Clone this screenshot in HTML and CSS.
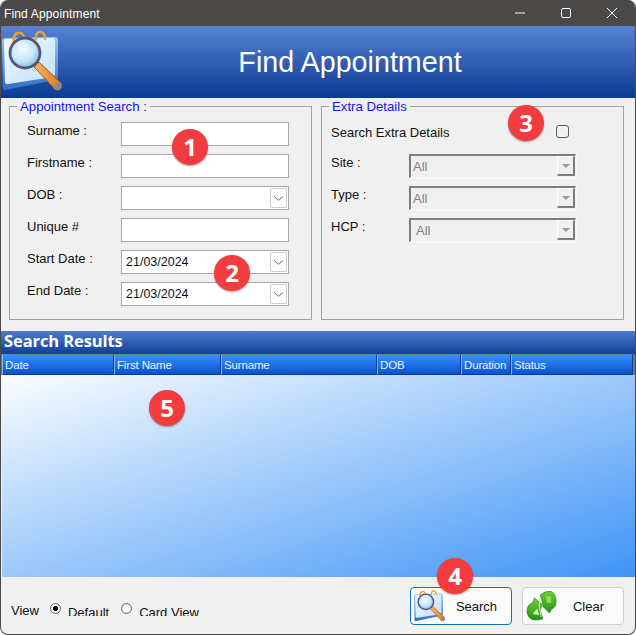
FILE: index.html
```html
<!DOCTYPE html>
<html lang="en">
<head>
<meta charset="utf-8">
<title>Find Appointment</title>
<link rel="stylesheet" href="styles.css">
</head>
<body>
<svg class="defs" width="0" height="0" aria-hidden="true">
  <defs>
    <linearGradient id="pageFill" x1="0" y1="0" x2="1" y2="1"><stop offset="0" stop-color="#f2faff"/><stop offset="1" stop-color="#bfe0f8"/></linearGradient>
    <linearGradient id="pageSide" x1="0" y1="0" x2="0" y2="1"><stop offset="0" stop-color="#9cc8ef"/><stop offset="1" stop-color="#2f6ec4"/></linearGradient>
    <radialGradient id="lens" cx="0.42" cy="0.38" r="0.65"><stop offset="0" stop-color="#f4fcff"/><stop offset="0.6" stop-color="#c4e6f7"/><stop offset="1" stop-color="#86bbdc"/></radialGradient>
    <linearGradient id="handle" x1="0" y1="0" x2="1" y2="0"><stop offset="0" stop-color="#f8b565"/><stop offset="1" stop-color="#da781c"/></linearGradient>
    <linearGradient id="leaf" x1="0" y1="0" x2="0" y2="1"><stop offset="0" stop-color="#6fd232"/><stop offset="1" stop-color="#249312"/></linearGradient>
    <symbol id="finder" viewBox="0 0 62 64">
      <path d="M3 8 L53 7 Q56 7 56 10 L56 46 Q56 49 53 50 L4 60 Q1 61 1 58 L0 11 Q0 8 3 8Z" fill="url(#pageSide)"/>
      <path d="M4 9 L51 8 Q53 8 53 10 L53 44 Q53 46 51 47 L6 54 Q3 54 3 52 L2 11 Q2 9 4 9Z" fill="url(#pageFill)"/>
      <path d="M12 13 C9 1 22 -1 23 10" fill="none" stroke="#e0a52c" stroke-width="2.6"/>
      <path d="M34 10 C32 -1 44 -1 43 10" fill="none" stroke="#e0a52c" stroke-width="2.6"/>
      <path d="M32 37 L37 32 L59 53 Q61 58 57 60 Q53 61 51 57Z" fill="url(#handle)" stroke="#9a5a1c" stroke-width="1"/>
      <path d="M51 57 Q53 61 57 60 Q61 58 59 53 Q54 52 51 57Z" fill="#8b8b8b"/>
      <circle cx="23" cy="23" r="15" fill="url(#lens)" stroke="#57557f" stroke-width="2.800"/>
    </symbol>
    <symbol id="recycle" viewBox="0 0 34 34">
      <path d="M1 23 Q1 15 7 13 L9 8 L17 15 L15 21 L18 30 Q12 32 7 31 Q2 29 1 23Z" fill="url(#leaf)" stroke="#1f8210" stroke-width=".7"/>
      <path d="M15 5 Q20 0 27 1 Q32 4 32 12 Q32 18 27 20 L25 24 L18 17 L17 10Z" fill="url(#leaf)" stroke="#1f8210" stroke-width=".7"/>
      <path d="M7 25 L12 19 L14 26Z" fill="#d8f2c4"/>
      <path d="M21 6 L26 6 L27 13 L22 13Z" fill="#8fe05a"/>
      <path d="M15 7 L14 16 L16 28" stroke="#dcdcdc" stroke-width="1.100" fill="none"/>
    </symbol>
  </defs>
</svg>

<div class="window">
  <header class="titlebar">
    <span class="title">Find Appointment</span>
    <div class="caption-buttons">
      <svg class="caption" viewBox="0 0 46 26"><path d="M18 13h10" stroke="#fff" fill="none"/></svg>
      <svg class="caption" viewBox="0 0 46 26"><rect x="18.500" y="8.500" width="9" height="9" rx="1.500" stroke="#fff" fill="none"/></svg>
      <svg class="caption" viewBox="0 0 46 26"><path d="M18 8l10 10M28 8l-10 10" stroke="#fff" fill="none"/></svg>
    </div>
  </header>

  <section class="banner">
    <svg class="banner-icon"><use href="#finder"/></svg>
    <h1>Find Appointment</h1>
  </section>

  <main class="panels">
    <fieldset class="group">
      <legend>Appointment Search :</legend>
      <div class="form">
        <label>Surname :</label><div class="field"></div>
        <label>Firstname :</label><div class="field"></div>
        <label>DOB :</label><div class="field"><span class="drop"><svg viewBox="0 0 16 19"><path d="M3.500 8l4.500 4 4.500-4" fill="none" stroke="#666"/></svg></span></div>
        <label>Unique #</label><div class="field"></div>
        <label>Start Date :</label><div class="field">21/03/2024<span class="drop"><svg viewBox="0 0 16 19"><path d="M3.500 8l4.500 4 4.500-4" fill="none" stroke="#666"/></svg></span></div>
        <label>End Date :</label><div class="field">21/03/2024<span class="drop"><svg viewBox="0 0 16 19"><path d="M3.500 8l4.500 4 4.500-4" fill="none" stroke="#666"/></svg></span></div>
      </div>
    </fieldset>

    <fieldset class="group">
      <legend>Extra Details</legend>
      <div class="extra-check">
        <span>Search Extra Details</span>
        <span class="checkbox"></span>
      </div>
      <div class="form extra">
        <label>Site :</label><div class="select">All<span class="select-btn"></span></div>
        <label>Type :</label><div class="select">All<span class="select-btn"></span></div>
        <label>HCP :</label><div class="select inset">All<span class="select-btn"></span></div>
      </div>
    </fieldset>
  </main>

  <section class="results">
    <h2>Search Results</h2>
    <div class="grid-head">
      <div class="col c1">Date</div>
      <div class="col c2">First Name</div>
      <div class="col c3">Surname</div>
      <div class="col c4">DOB</div>
      <div class="col c5">Duration</div>
      <div class="col c6">Status</div>
    </div>
    <div class="grid-body"></div>
  </section>

  <footer class="footer">
    <div class="view">
      <span class="view-label">View</span>
      <span class="radio on"></span><span class="opt opt-default">Default</span>
      <span class="radio"></span><span class="opt">Card View</span>
    </div>
    <div class="actions">
      <button class="btn focus"><svg class="btn-icon"><use href="#finder"/></svg><span>Search</span></button>
      <button class="btn"><svg class="btn-icon"><use href="#recycle"/></svg><span>Clear</span></button>
    </div>
  </footer>

  <span class="badge b1">1</span>
  <span class="badge b2">2</span>
  <span class="badge b3">3</span>
  <span class="badge b4">4</span>
  <span class="badge b5">5</span>
</div>
</body>
</html>
```
FILE: styles.css
```css
* { box-sizing: border-box; }
html, body { margin: 0; padding: 0; background: #fff; }
body { width: 636px; height: 635px; overflow: hidden; font-family: "Liberation Sans", Arial, sans-serif; font-size: 13px; color: #111; }
.defs { position: absolute; }
.window { position: relative; width: 636px; height: 635px; display: flex; flex-direction: column; background: #f0f0f0; border: 1px solid #4b4947; border-top: 0; border-radius: 8px; overflow: hidden; }

.titlebar { height: 26px; flex: none; margin: 0 -1px; background: #4b4947; color: #fff; display: flex; align-items: center; justify-content: space-between; padding-left: 4px; }
.title { font-size: 12px; letter-spacing: .15px; padding-top: 2px; }
.caption-buttons { display: flex; margin-right: 1px; }
.caption { width: 46px; height: 26px; display: block; }

.banner { height: 72px; flex: none; display: flex; align-items: center; background: linear-gradient(#5683d3, #0a3a92); }
.banner-icon { width: 62px; height: 64px; flex: none; margin: 0 1px; overflow: visible; }
.banner h1 { flex: 1; margin: 0; text-align: center; color: #fff; font: 400 28.700px "Liberation Sans", Arial, sans-serif; }

.panels { height: 233px; flex: none; display: grid; grid-template-columns: 303px 303px; column-gap: 9px; padding: 0 0 0 8px; align-items: start; }
.group { height: 222px; margin: 0; padding: 0; border: 1px solid #a0a0a0; min-width: 0; }
.group legend { margin-left: 7px; padding: 0 3px; height: 16px; line-height: 17.500px; color: #1414f0; font-size: 13.200px; }
.form { display: grid; grid-template-columns: 94px 168px; grid-auto-rows: 24px; row-gap: 8px; padding: 8px 0 0 17px; }
.form label { line-height: 16px; height: 16px; margin-top: 1px; align-self: start; }
.field { position: relative; background: #fff; border: 1px solid #a9a9a9; line-height: 23px; padding-left: 4px; font-size: 12.500px; }
.drop { position: absolute; right: 1px; top: 1px; width: 17px; height: 20px; border: 1px solid #cfcfcf; border-radius: 2px; background: #fff; }
.drop svg { display: block; width: 100%; height: 100%; }

.extra-check { display: flex; align-items: center; justify-content: space-between; height: 16px; margin: 10px 54px 0 9px; }
.checkbox { width: 13px; height: 13px; margin-top: -1px; border: 1px solid #5a5a5a; border-radius: 3px; }
.form.extra { grid-template-columns: 78px 167px; padding: 14px 0 0 9px; }
.select { position: relative; background: #f0f0f0; border-style: solid; border-width: 2px 1px 1px 2px; border-color: #7d7d7d #f8f8f8 #f8f8f8 #7d7d7d; box-shadow: 1px 1px 0 #f8f8f8; color: #808080; line-height: 22px; padding-left: 2px; font-size: 13px; }
.select.inset { padding-left: 5px; }
.select-btn { position: absolute; right: 0; top: 0; width: 18px; height: 20px; background: #f0f0f0; border-style: solid; border-width: 1px 2px 2px 1px; border-color: #fff #7d7d7d #7d7d7d #fff; }
.select-btn::after { content: ""; position: absolute; left: 4px; top: 7px; border: 4px solid transparent; border-top: 4px solid #999; border-bottom: 0; }

.results { flex: none; display: flex; flex-direction: column; }
.results h2 { height: 23px; margin: 0; padding-left: 3px; background: linear-gradient(#4f7ccb, #0f3f96); color: #fff; font: 700 16.500px/19px "Open Sans", sans-serif; letter-spacing: -.1px; }
.grid-head { height: 21px; display: grid; grid-template-columns: 112px 107px 156px 84px 50px 122px; padding-left: 1px; background: #777; }
.col { background: linear-gradient(#3890ff, #0a52cc); border-left: 1px solid #7eb2fa; border-right: 1px solid #0b3d96; border-bottom: 1px solid #0a3a8c; border-top: 1px solid #6d7f9c; color: #eaf2ff; font-size: 11.500px; letter-spacing: -.15px; line-height: 21px; padding-left: 2px; white-space: nowrap; overflow: hidden; }
.grid-body { height: 202px; margin-left: 1px; background: linear-gradient(to bottom right, #fafdff, #3f94f6); }

.footer { flex: 1; display: flex; justify-content: space-between; align-items: flex-start; padding: 10px 11px 0 10px; }
.view { display: flex; align-items: flex-start; height: 29px; overflow: hidden; }
.view-label { margin: 16px 11px 0 0; }
.opt { margin: 18px 0 0 7px; line-height: 16px; }
.opt-default { margin-right: 12px; }
.radio { width: 11px; height: 11px; margin-top: 16px; border-radius: 50%; border: 1px solid #6a6a6a; background: #fff; box-shadow: inset 0 0 0 1px #e4e4e4; }
.radio.on { background: radial-gradient(circle, #000 0 2.200px, #fff 2.800px); }
.actions { display: flex; gap: 10px; }
.btn { width: 102px; height: 38px; display: flex; align-items: center; padding: 0 0 0 3px; background: #fbfbfb; border: 1px solid #cfcfcf; border-radius: 4px; font: 13px "Liberation Sans", Arial, sans-serif; color: #111; }
.btn.focus { border: 1.500px solid #0a74c8; }
.btn span { flex: 1; text-align: center; padding: 0 4px 0 0; }
.btn-icon { width: 32px; height: 33px; flex: none; }

.badge { position: absolute; width: 36px; height: 36px; border-radius: 50%; background: #f33c3f; box-shadow: 0 1px 2px rgba(0,0,0,.35); color: #fff; text-align: center; font: 700 24px/36px "Open Sans", sans-serif; }
.b1 { left: 171px; top: 129px; }
.b2 { left: 213px; top: 255px; }
.b3 { left: 507px; top: 105px; }
.b4 { left: 436px; top: 558px; }
.b5 { left: 148px; top: 390px; }
```
